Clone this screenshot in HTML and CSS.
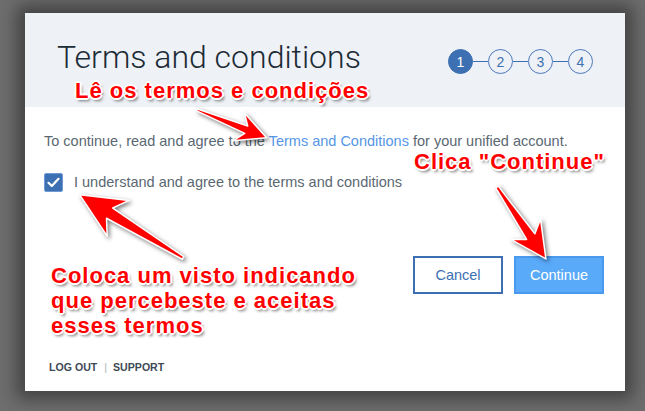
FILE: index.html
```html
<!DOCTYPE html>
<html lang="pt">
<head>
<meta charset="utf-8">
<title>Terms and conditions</title>
<link rel="stylesheet" href="styles.css">
</head>
<body>
<div class="dialog">
  <header class="dialog-header">
    <h1 class="title">Terms and conditions</h1>
    <ol class="steps">
      <li class="step step-active">1</li>
      <li class="step-line"></li>
      <li class="step">2</li>
      <li class="step-line"></li>
      <li class="step">3</li>
      <li class="step-line"></li>
      <li class="step">4</li>
    </ol>
  </header>
  <main class="dialog-body">
    <p class="intro">To continue, read and agree to the <a class="link" href="#">Terms and Conditions</a> for your unified account.</p>
    <label class="agree">
      <span class="checkbox">
        <svg width="13" height="11" viewBox="0 0 13 11"><path d="M1.5 5.8 L4.8 9 L11.5 1.8" fill="none" stroke="#fff" stroke-width="2.2" stroke-linecap="round" stroke-linejoin="round"/></svg>
      </span>
      <span class="agree-text">I understand and agree to the terms and conditions</span>
    </label>
    <div class="actions">
      <button class="btn btn-secondary">Cancel</button>
      <button class="btn btn-primary">Continue</button>
    </div>
  </main>
  <footer class="dialog-footer">
    <a class="foot-link" href="#">LOG OUT</a>
    <span class="foot-sep">|</span>
    <a class="foot-link" href="#">SUPPORT</a>
  </footer>
</div>

<div class="note note-read">Lê os termos e condições</div>
<div class="note note-click">Clica "Continue"</div>
<div class="note note-check">Coloca um visto indicando<br>que percebeste e aceitas<br>esses termos</div>

<svg class="arrows" width="645" height="411" viewBox="0 0 645 411">
  <g transform="translate(197,110) rotate(21.8)">
    <polygon class="arrow" points="0,-1 53,-4 45,-15 75,0 45,15 53,4 0,1"/>
  </g>
  <g transform="translate(183,258) rotate(211.45)">
    <polygon class="arrow" points="0,-1.5 86,-6 76,-21 121,0 76,21 86,6 0,1.5"/>
  </g>
  <g transform="translate(497,187) rotate(55.8)">
    <polygon class="arrow" points="0,-1.5 60,-5 51,-18 87,0 51,18 60,5 0,1.5"/>
  </g>
</svg>
</body>
</html>
```
FILE: styles.css
```css
* { box-sizing: border-box; }

html, body {
  margin: 0;
  height: 100%;
}

body {
  background: #6e6e6e;
  padding: 13px 0 0 25px;
  font-family: "Liberation Sans", Arial, sans-serif;
  position: relative;
  overflow: hidden;
}

.dialog {
  width: 600px;
  height: 378px;
  background: #fff;
  box-shadow: 0 0 16px 8px rgba(30, 30, 30, 0.55);
  display: flex;
  flex-direction: column;
}

.dialog-header {
  height: 94px;
  background: #eef2f6;
  display: flex;
  justify-content: space-between;
  align-items: flex-start;
  padding: 24px 32px 0 32px;
}

.title {
  margin: 0;
  font-family: Roboto, "Liberation Sans", sans-serif;
  font-weight: 300;
  font-size: 32px;
  line-height: 40px;
  color: #1d2b36;
}

.steps {
  list-style: none;
  margin: 12px 0 0 0;
  padding: 0;
  display: flex;
  align-items: center;
}

.step {
  width: 25px;
  height: 25px;
  border-radius: 50%;
  border: 1px solid #4a78ba;
  color: #3d70b2;
  font-size: 14px;
  display: flex;
  align-items: center;
  justify-content: center;
  background: transparent;
}

.step-active {
  background: #3d70b2;
  border-color: #3d70b2;
  color: #fff;
}

.step-line {
  width: 15px;
  height: 1px;
  background: #3d70b2;
}

.dialog-body {
  flex: 1;
  padding: 24px 21px 0 19px;
  display: flex;
  flex-direction: column;
}

.intro {
  margin: 0;
  font-size: 14.5px;
  line-height: 20px;
  color: #5a6872;
}

.link {
  color: #5596e6;
  text-decoration: none;
}

.agree {
  margin-top: 21px;
  display: flex;
  align-items: center;
  gap: 11px;
}

.checkbox {
  width: 19px;
  height: 19px;
  border-radius: 2px;
  background: #3d70b2;
  border: 1px solid #6f9bd4;
  display: flex;
  align-items: center;
  justify-content: center;
}

.agree-text {
  font-size: 14.5px;
  line-height: 20px;
  color: #5a6872;
}

.actions {
  margin-top: 64px;
  display: flex;
  justify-content: flex-end;
  gap: 11px;
}

.btn {
  width: 90px;
  height: 38px;
  font-family: "Liberation Sans", Arial, sans-serif;
  font-size: 14.5px;
  border: 2px solid #3d70b2;
  padding: 0;
}

.btn-secondary {
  background: #fff;
  color: #3d70b2;
}

.btn-primary {
  background: #5aaafa;
  border-color: #4b98ef;
  color: #fff;
}

.dialog-footer {
  margin-top: auto;
  padding: 0 0 17px 24px;
  display: flex;
  align-items: center;
  font-size: 10.6px;
  line-height: 14px;
}

.foot-link {
  color: #3d4a55;
  font-weight: bold;
  text-decoration: none;
}

.foot-sep {
  color: #a9b3bb;
  margin: 0 6px 0 7px;
}

.note {
  position: absolute;
  font-family: "Liberation Sans", Arial, sans-serif;
  font-weight: bold;
  font-size: 22px;
  line-height: 22px;
  letter-spacing: 1px;
  color: #ff0000;
  white-space: nowrap;
  text-shadow:
    -1px -1px 0 #fff, 1px -1px 0 #fff, -1px 1px 0 #fff, 1px 1px 0 #fff,
    0 -2px 0 #fff, 0 2px 0 #fff, -2px 0 0 #fff, 2px 0 0 #fff,
    2px 3px 3px rgba(0, 0, 0, 0.55);
}

.note-read { left: 75px; top: 80px; }
.note-click { left: 414px; top: 151px; }
.note-check { left: 51px; top: 263px; line-height: 25px; }

.arrows {
  position: absolute;
  left: 0;
  top: 0;
  pointer-events: none;
  filter: drop-shadow(2px 2px 2px rgba(0, 0, 0, 0.5));
}

.arrow {
  fill: #ff0000;
  stroke: #fff;
  stroke-width: 1.5;
  stroke-linejoin: round;
}
```
